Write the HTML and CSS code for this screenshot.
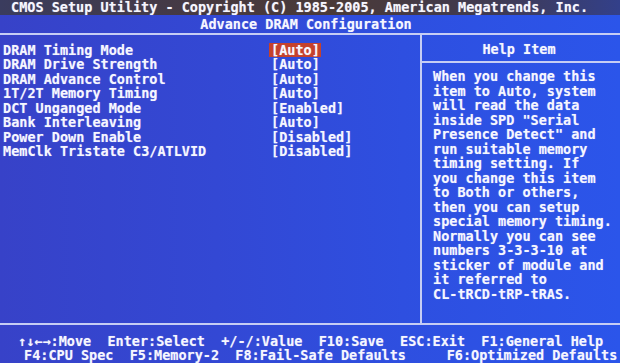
FILE: index.html
```html
<!DOCTYPE html>
<html>
<head>
<meta charset="utf-8">
<link rel="stylesheet" href="styles.css">
</head>
<body>
<div class="screen">
  <header class="title">CMOS Setup Utility - Copyright (C) 1985-2005, American Megatrends, Inc.</header>
  <div class="subtitle">Advance DRAM Configuration</div>
  <main class="panels">
    <section class="settings">
      <div class="row"><span class="label">DRAM Timing Mode</span><span class="value selected">[Auto]</span></div>
      <div class="row"><span class="label">DRAM Drive Strength</span><span class="value">[Auto]</span></div>
      <div class="row"><span class="label">DRAM Advance Control</span><span class="value">[Auto]</span></div>
      <div class="row"><span class="label">1T/2T Memory Timing</span><span class="value">[Auto]</span></div>
      <div class="row"><span class="label">DCT Unganged Mode</span><span class="value">[Enabled]</span></div>
      <div class="row"><span class="label">Bank Interleaving</span><span class="value">[Auto]</span></div>
      <div class="row"><span class="label">Power Down Enable</span><span class="value">[Disabled]</span></div>
      <div class="row"><span class="label">MemClk Tristate C3/ATLVID</span><span class="value">[Disabled]</span></div>
    </section>
    <aside class="help">
      <div class="help-head">Help Item</div>
      <div class="help-body">When you change this
item to Auto, system
will read the data
inside SPD "Serial
Presence Detect" and
run suitable memory
timing setting. If
you change this item
to Both or others,
then you can setup
special memory timing.
Normally you can see
numbers 3-3-3-10 at
sticker of module and
it referred to
CL-tRCD-tRP-tRAS.</div>
    </aside>
  </main>
  <footer class="keys">
    <div class="keyline first">↑↓←→:Move  Enter:Select  +/-/:Value  F10:Save  ESC:Exit  F1:General Help</div>
    <div class="keyline second">F4:CPU Spec  F5:Memory-2  F8:Fail-Safe Defaults     F6:Optimized Defaults</div>
  </footer>
</div>
</body>
</html>
```

FILE: styles.css
```css
* { box-sizing: border-box; }

html, body {
  margin: 0;
  padding: 0;
}

body {
  width: 620px;
  height: 363px;
  overflow: hidden;
  background: #3047d6;
}

.screen {
  width: 620px;
  height: 363px;
  display: flex;
  flex-direction: column;
  background: linear-gradient(90deg, #3742c8 0%, #3348d4 35%, #2e4fe0 65%, #2b55ea 100%);
  color: #f6f6ff;
  font-family: "DejaVu Sans Mono", "Liberation Mono", monospace;
  font-weight: bold;
  font-size: 13.5px;
  line-height: 14.5px;
  text-shadow: 0 0 1px rgba(255, 255, 255, 0.45);
}

.title {
  height: 15px;
  line-height: 15px;
  padding-left: 11px;
  white-space: pre;
  background: linear-gradient(90deg, #3a3c5e 0%, #47393f 35%, #4a3a38 55%, #3f3a52 80%, #33408a 100%);
}

.subtitle {
  height: 18px;
  padding-top: 2px;
  text-align: center;
  padding-right: 8px;
}

.panels {
  height: 292px;
  display: flex;
  border-top: 2px solid #c6cdf4;
  border-bottom: 2px solid #c6cdf4;
}

.settings {
  width: 422px;
  padding: 7.5px 0 0 3px;
  border-right: 2px solid #c6cdf4;
}

.row {
  display: flex;
  height: 14.5px;
  white-space: pre;
}

.label {
  width: 268px;
}

.value.selected {
  background: #c5412c;
  margin-left: -2px;
  padding: 0 1px 0 2px;
}

.help {
  flex: 1;
  display: flex;
  flex-direction: column;
}

.help-head {
  height: 28px;
  padding-top: 7px;
  text-align: center;
  padding-right: 4px;
  border-bottom: 2px solid #c6cdf4;
}

.help-body {
  padding: 6px 0 0 11px;
  white-space: pre;
}

.keys {
  flex: 1;
  padding-top: 8.5px;
}

.keyline {
  white-space: pre;
  height: 14.5px;
}

.keyline.first {
  padding-left: 18px;
}

.keyline.second {
  padding-left: 24px;
}
```
